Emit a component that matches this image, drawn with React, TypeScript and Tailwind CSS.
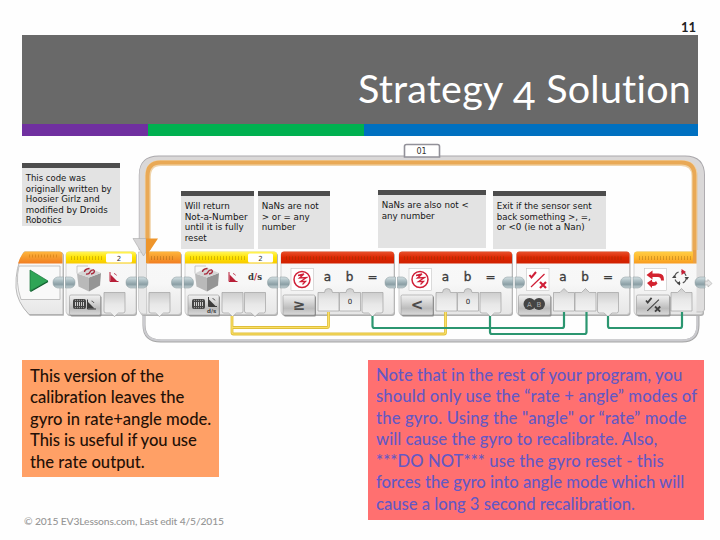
import type { ReactNode } from "react";

const UI = '"DejaVu Sans", sans-serif';

function Note({ lines, box, widths }: { lines: string[]; box: string; widths: number[] }) {
  return (
    <div className={`absolute border-t-[5px] border-[#4d4d4d] bg-[#e3e3e3] ${box}`}>
      <svg className="block overflow-visible" width="100%" height="100%">
        {lines.map((l, i) => (
          <text key={l} x="3.7" y={13 + i * 10.5} fontSize="9.300" textLength={widths[i]} lengthAdjust="spacingAndGlyphs" fontFamily={UI} fill="#161616">
            {l}
          </text>
        ))}
      </svg>
    </div>
  );
}

function Block({ x, w, fill, tab = 0 }: { x: number; w: number; fill: string; tab?: number }) {
  return (
    <g>
      <rect x={x + 1} y={253} width={w} height={63} rx="3" fill="#b0b0b0" />
      <rect x={x} y={252} width={w} height={62.5} rx="3" fill="url(#body)" stroke="#c2c2c2" strokeWidth=".7" />
      <path d={`M${x} 263.500V254.500q0-3 3-3h${w - 6}q3 0 3 3V263.500z`} fill={fill} />
      <path d={`M${x + 5} 258H${x + w - 7 - tab}`} stroke="#5a3a00" strokeOpacity=".25" strokeWidth="4" strokeDasharray="1 2" />
      {tab > 0 && (
        <>
          <rect x={x + w - tab - 4} y="253.500" width={tab} height="9" rx="1.500" fill="#fff" />
          <text x={x + w - tab / 2 - 4} y="260.500" fontSize="7" textAnchor="middle" fontFamily={UI} fill="#333">2</text>
        </>
      )}
    </g>
  );
}

/* Connector joining two neighbouring blocks */
function Joint({ x }: { x: number }) {
  return (
    <g>
      <path d={`M${x - 1} 277h-6q-4.500 1-4.500 5.500t4.500 5.500h6z`} fill="url(#joint)" stroke="#84979b" strokeWidth=".5" />
      <path d={`M${x + 1} 277h5q4.500 1 4.500 5.500t-4.500 5.500h-5z`} fill="url(#joint)" stroke="#84979b" strokeWidth=".5" />
    </g>
  );
}

function Mode({ x, w, children }: { x: number; w: number; children: ReactNode }) {
  return (
    <g>
      <rect x={x + 1} y="296" width={w} height="20.500" rx="1.500" fill="#8c8c8c" />
      <rect x={x} y="295" width={w} height="20" rx="1.500" fill="url(#mode)" stroke="#999" strokeWidth=".6" />
      {children}
    </g>
  );
}

/* Socket with a bump on top (input) or a tip at the bottom (output) */
function Port({ x, out = false, round = false, w = 21 }: { x: number; out?: boolean; round?: boolean; w?: number }) {
  const m = x + w / 2;
  const d = out
    ? `M${x} 292.500H${x + w}V311q0 2-2 2H${m + 4}l-4 3.500l-4-3.500H${x + 2}q-2 0-2-2z`
    : round
      ? `M${x} 292.500H${m - 4}q0-4 4-4t4 4H${x + w}V311H${x}z`
      : `M${x} 292.500H${m - 4}l4-4l4 4H${x + w}V311H${x}z`;
  return <path d={d} fill="url(#port)" stroke="#a2a2a2" strokeWidth=".7" />;
}

function Gyro({ x }: { x: number }) {
  return (
    <g transform={`translate(${x} 266.500)`}>
      <path d="M0 7L12 11V25L1.500 20z" fill="#b9b9b9" />
      <path d="M12 11L24 6.500L23 19L12 25z" fill="#959595" />
      <path d="M0 7L11.500 1L24 6.500L12 11z" fill="#d6d6d6" />
      <path d="M0 7V-.500H11" stroke="#aaa" strokeWidth=".6" fill="none" />
      <path d="M7.500 5.500q0-3 5-3.500M17 3.500q1.500 3-3 4M9 7.500q3 .500 4-2t4-2" stroke="#a82a3c" strokeWidth="1.400" fill="none" />
    </g>
  );
}

function Angle({ x, y, color }: { x: number; y: number; color: string }) {
  return (
    <g transform={`translate(${x} ${y})`}>
      <path d="M.500 0V9.500H9" stroke={color} fill="none" />
      <path d="M1 2.500L7.500 9H1z" fill={color} />
      <path d="M4.500 1.500q1.500 0 2.500 2" stroke={color} fill="none" strokeWidth=".8" />
    </g>
  );
}

function Film({ x }: { x: number }) {
  return (
    <g transform={`translate(${x} 299)`}>
      <rect width="13" height="10" rx="2" fill="#444" />
      <path d="M2 1.300h9M2 8.700h9" stroke="#ccc" strokeWidth=".7" strokeDasharray="1 1" />
      <path d="M2.500 3v4M4.500 3v4M6.500 3v4M8.500 3v4M10.500 3v4" stroke="#ddd" strokeWidth=".9" />
    </g>
  );
}

function CheckX({ x, y, s, a, b }: { x: number; y: number; s: number; a: string; b: string }) {
  return (
    <g transform={`translate(${x} ${y}) scale(${s})`} fill="none">
      <path d="M0 4l2 2.500L6.500 1" stroke={a} strokeWidth="2" />
      <path d="M1.500 16L15 3" stroke={a} strokeWidth="1.200" />
      <path d="M10.500 11l6 6M16.500 11l-6 6" stroke={b} strokeWidth="2.200" />
    </g>
  );
}

function Compare({ x, op, num = true }: { x: number; op?: string; num?: boolean }) {
  return (
    <g>
      <Block x={x} w={113} fill="url(#red)" />
      <rect x={x + 10} y="268.500" width="22.500" height="22" fill="#fff" stroke="#c5c5c5" strokeWidth=".6" />
      {op ? (
        <g stroke="#d01f37" fill="none" strokeWidth="1.500">
          <circle cx={x + 21} cy="279.500" r="8" />
          <path d={`M${x + 17} 275.500l6-1.500l-4.500 4l7-.500l-6 4l5 0l-3 3`} strokeWidth="1.300" />
        </g>
      ) : (
        <CheckX x={x + 13} y={271} s={1} a="#d01f37" b="#d01f37" />
      )}
      <g fontFamily={UI} fontSize="12" fill="#3c3c3c" stroke="#3c3c3c" strokeWidth=".35" textAnchor="middle">
        <text x={x + 46.500} y="281">a</text>
        <text x={x + 68.500} y="281">b</text>
        <text x={x + 91.500} y="281">=</text>
      </g>
      <Port x={x + 37} round={num} />
      <Port x={x + 58.500} round={num} />
      <Port x={x + 81} out />
      {num && <text x={x + 69} y="303.500" fontSize="7" textAnchor="middle" fontFamily={UI} fill="#222">0</text>}
      <Mode x={x + 2} w={32}>
        {op ? (
          <text x={x + 18} y="309.500" fontSize="15" textAnchor="middle" fontFamily={UI} fontWeight="bold" fill="#4b4b4b">{op}</text>
        ) : (
          <g>
            <circle cx={x + 13} cy="304" r="6" fill="#444" />
            <circle cx={x + 22.500} cy="304" r="6" fill="#444" />
            <text x={x + 13} y="306.700" fontSize="7" textAnchor="middle" fontFamily={UI} fill="#aaa">A</text>
            <text x={x + 22.500} y="306.700" fontSize="7" textAnchor="middle" fontFamily={UI} fill="#aaa">B</text>
          </g>
        )}
      </Mode>
    </g>
  );
}

function Gradient({ id, stops }: { id: string; stops: string[] }) {
  return (
    <linearGradient id={id} x1="0" y1="0" x2="0" y2="1">
      {stops.map((c, i) => (
        <stop key={i} offset={i / (stops.length - 1)} stopColor={c} />
      ))}
    </linearGradient>
  );
}

function Program() {
  return (
    <svg className="block" width="720" height="214" viewBox="0 136 720 214">
      <defs>
        <Gradient id="body" stops={["#f8f8f8", "#f7f7f7", "#e6e6e6"]} />
        <Gradient id="mode" stops={["#f2f2f2", "#d8d8d8", "#bcbcbc", "#dadada"]} />
        <Gradient id="port" stops={["#cdcdcd", "#e8e8e8", "#f2f2f2"]} />
        <Gradient id="joint" stops={["#d5e1e4", "#aebfc4", "#8b9fa5", "#c6d3d6"]} />
        <Gradient id="orange" stops={["#ffb63e", "#f69a2c", "#f27d22"]} />
        <Gradient id="amber" stops={["#ffce45", "#ffb92e", "#f79b20"]} />
        <Gradient id="yellow" stops={["#fff45e", "#ffe400", "#f8c900"]} />
        <Gradient id="red" stops={["#e8522d", "#dd2600", "#cf2000"]} />
      </defs>

      {/* loop frame */}
      <path d="M144 310V325q0 16 17 16H682q16 0 16-16V310" fill="none" stroke="#a5a5a5" strokeWidth="3" />
      <path d="M144 310V325q0 15.500 17 15.500H682q15.500 0 15.500-15.500V310" fill="none" stroke="#cbcbcf" strokeWidth="2" />
      <path d="M142.800 250V175q0-15.500 16-15.500H685q16 0 16 16V310" fill="none" stroke="#aaa8ac" strokeWidth="8" />
      <path d="M142.800 250V175q0-15.200 16-15.200H685q15.700 0 15.700 15.700V310" fill="none" stroke="#dad8d8" strokeWidth="6.800" />
      <path d="M147.800 250V177q0-14 13-14H681q13.500 0 13.500 13V256" fill="none" stroke="#f0d4aa" strokeWidth="6" />
      <path d="M147.500 250V176q0-13.500 13-13.500H681q13.500 0 13.500 13V256" fill="none" stroke="#e9a956" strokeWidth="4" />
      <path d="M404.500 157V146.500q0-2 2-2h31q2 0 2 2V157z" fill="#fff" stroke="#929199" strokeWidth="1.600" />
      <text x="421.500" y="154" fontSize="8" textAnchor="middle" fontFamily={UI} fill="#333">01</text>

      {/* start block */}
      <path d="M24 252H60q3 0 3 3V315H29Q17 302 16 288Q15 267 24 252z" fill="#b0b0b0" transform="translate(.8 .8)" />
      <path d="M24 252H60q3 0 3 3V314.500H29Q17 302 16 288Q15 267 24 252z" fill="url(#body)" stroke="#aaa" strokeWidth=".8" />
      <path d="M18 263.500Q21 254 25 251.500H59q3.500 0 3.500 3V263.500z" fill="url(#orange)" />
      <path d="M29 256H57" stroke="#b96a00" strokeOpacity=".4" strokeWidth="3" strokeDasharray="1 2" />
      <path d="M19 266H60V299.500H21Q15 282 19 266z" fill="#f9f9f9" stroke="#b4b4b4" strokeWidth=".8" />
      <path d="M30 270L48 281L30 291z" fill="#2fa556" stroke="#147438" strokeWidth=".7" />
      <path d="M30.500 291.500L48 281.500" stroke="#0b5f2a" strokeWidth="1.200" />

      <Block x={66} w={70} fill="url(#yellow)" tab={26} />
      <Gyro x={77} />
      <Angle x={109.500} y={272} color="#b81f38" />
      <Port x={104} out />
      <Mode x={69.500} w={31}>
        <Film x={73} />
        <Angle x={87} y={299.500} color="#3d3d3d" />
      </Mode>

      <Block x={140} w={41} fill="url(#orange)" />
      <path d="M138.500 252V308q0 5 5 6h3V252z" fill="#e8e8e8" stroke="#bdbdbd" strokeWidth=".6" />
      <path d="M133 238.500H146V252L143.500 256z" fill="#d6d5d6" stroke="#aaa" strokeWidth=".6" />
      <path d="M146 238.500H158L149 252V263H146z" fill="#ee952b" />
      <Port x={149} out />

      <Block x={185} w={92} fill="url(#yellow)" tab={25} />
      <Gyro x={195} />
      <Angle x={228.500} y={272} color="#b81f38" />
      <text x="248" y="280" fontFamily={'"DejaVu Serif", serif'} fontWeight="bold" fontSize="8.500" textLength="14" lengthAdjust="spacingAndGlyphs" fill="#3b3b3b">
        d<tspan fill="#c61d34">/</tspan>s
      </text>
      <Port x={222} out />
      <Port x={244.500} out />
      <Mode x={188} w={31}>
        <Film x={192} />
        <Angle x={208} y={297} color="#3d3d3d" />
        <text x="207" y="312.500" fontSize="5.500" fontFamily={UI} fontWeight="bold" fill="#444">d/s</text>
      </Mode>

      <Compare x={281} op="≥" />
      <Compare x={399} op="<" />
      <Compare x={516.500} num={false} />

      {/* loop exit block */}
      <Block x={634} w={69} fill="url(#amber)" />
      <path d="M693 250V263H697V250z" fill="#eaa044" />
      <path d="M696.500 250H704.500V309q0 3-3 3h-5z" fill="#dfdede" />
      <path d="M704.500 250V309q0 3-3 3h-5" fill="none" stroke="#b2b2b2" strokeWidth=".7" />
      <rect x="644.500" y="268.500" width="22" height="22" fill="#fff" stroke="#c5c5c5" strokeWidth=".6" />
      <path d="M646.500 275l6-4.500v3h6q6 0 5.500 7h-3q0-3.500-3-3.500h-5.500v2.500zM647 283l5-3.500v2q3 1.500 4-.500l1.500 2.500q-2 3-5.500 2.500v2z" fill="#d3232f" />
      <circle cx="680.500" cy="277.500" r="5.800" fill="none" stroke="#555" strokeWidth="1.200" strokeDasharray="6.500 2.600" />
      <path d="M681.500 269l4.500 3l-4.500 3z" fill="#c71f36" />
      <path d="M684.500 277l2.500 3l2-3zM676.500 278l-2.200-3l-2.300 3zM680 281l-3 2.500l3 2z" fill="#444" />
      <Port x={671} />
      <Mode x={636.500} w={33}>
        <CheckX x={646} y={297} s={0.86} a="#404040" b="#404040" />
      </Mode>

      <Joint x={64.500} />
      <Joint x={137.500} />
      <Joint x={183} />
      <Joint x={279} />
      <Joint x={396.500} />
      <Joint x={514} />
      <Joint x={632} />
      <path d="M705 277h-5q-5 1-5 5.500t5 5.500h5z" fill="url(#joint)" stroke="#84979b" strokeWidth=".5" />
      <path d="M705 281h3v-1.500l4 4l-4 3.500v-2h-3z" fill="#e4e4e4" stroke="#aaa" strokeWidth=".6" />

      {/* data wires */}
      <g fill="none" strokeWidth="2.800" stroke="#dfbf3b">
        <path d="M232 316V332.500q0 1.500 1.500 1.500H444q1.500 0 1.500-1.500V312" />
        <path d="M232 327.500H327q1.500 0 1.500-1.500V312" />
      </g>
      <g fill="none" strokeWidth="1.200" stroke="#fbe066">
        <path d="M232 316V332.500q0 1.500 1.500 1.500H444q1.500 0 1.500-1.500V312" />
        <path d="M232 327.500H327q1.500 0 1.500-1.500V312" />
      </g>
      <g fill="none" strokeWidth="2.200" stroke="#2b9670">
        <path d="M372.500 316V326q0 2 2 2H562q2 0 2-2V312" />
        <path d="M490 316V332q0 2 2 2H584.500q2 0 2-2V312" />
        <path d="M608 316V326q0 2 2 2H680q2 0 2-2V312" />
      </g>
    </svg>
  );
}

function Lines({ rows }: { rows: [string, string][] }) {
  return (
    <>
      {rows.map(([text, tracking]) => (
        <div key={text} className={`whitespace-nowrap ${tracking}`}>{text}</div>
      ))}
    </>
  );
}

export default function App() {
  return (
    <main className="flex h-[540px] w-[720px] flex-col overflow-hidden bg-[#fefefe] font-[Lato,sans-serif]">
      <div className="flex h-[35px] items-end justify-end pr-6 pb-0 text-[13px] leading-4 font-bold text-[#222]">11</div>
      <header className="mx-[22px] flex h-[101px] flex-col">
        <h1 className="flex h-[89px] items-end justify-end bg-[#696969] pr-[7px] pb-[10px] text-[39.5px] leading-[52px] tracking-[0.2px] whitespace-pre text-white">
          <span>Strategy </span>
          <span className="relative top-[7px]">4</span>
          <span> Solution</span>
        </h1>
        <div className="flex h-3">
          <div className="w-[126px] bg-[#7030a0]" />
          <div className="w-[216px] bg-[#00b050]" />
          <div className="flex-1 bg-[#0070c0]" />
        </div>
      </header>

      <section className="relative h-[214px] shrink-0">
        <Program />
        <Note box="left-[22px] top-[27px] h-[63px] w-[98px]" lines={["This code was", "originally written by", "Hoosier Girlz and", "modified by Droids", "Robotics"]} widths={[60, 86, 74, 82, 36]} />
        <Note box="left-[181px] top-[55px] h-[58px] w-[73px]" lines={["Will return", "Not-a-Number", "until it is fully", "reset"]} widths={[45, 63, 59, 22]} />
        <Note box="left-[258px] top-[55px] h-[58px] w-[72px]" lines={["NaNs are not", "> or = any", "number"]} widths={[57, 48, 34]} />
        <Note box="left-[378px] top-[54px] h-[58px] w-[108px]" lines={["NaNs are also not <", "any number"]} widths={[87, 53]} />
        <Note box="left-[493px] top-[55px] h-[58px] w-[113px]" lines={["Exit if the sensor sent", "back something >, =,", "or <0 (ie not a Nan)"]} widths={[95, 94, 88]} />
      </section>

      <div className="flex h-[190px] pt-[10px] pr-4 pl-[22px] text-[16.6px] leading-[21.6px]">
        <div className="flex w-[346px] flex-col">
          <div className="h-[117px] w-[197px] bg-[#ffa066] pt-[5.5px] pl-2 font-medium text-[#241007]">
            <Lines
              rows={[
                ["This version of the", "tracking-[-0.04px]"],
                ["calibration leaves the", "tracking-[0.01px]"],
                ["gyro in rate+angle mode.", "tracking-[0.01px]"],
                ["This is useful if you use", "tracking-[-0.06px]"],
                ["the rate output.", "tracking-[0.01px]"],
              ]}
            />
          </div>
          <footer className="mt-[36px] pl-[2px] text-[10.3px] leading-4 font-medium tracking-[-0.13px] text-[#969696]">© 2015 EV3Lessons.com, Last edit 4/5/2015</footer>
        </div>
        <div className="h-[160px] w-[336px] bg-[#ff7070] pt-[4.5px] pl-2 font-medium text-[#6458c4]">
          <Lines
            rows={[
              ["Note that in the rest of your program, you", "tracking-[0.07px]"],
              ["should only use the “rate + angle” modes of", "tracking-[0.14px]"],
              ["the gyro. Using the \"angle\" or “rate” mode", "tracking-[0.18px]"],
              ["will cause the gyro to recalibrate. Also,", "tracking-[0.04px]"],
              ["***DO NOT*** use the gyro reset - this", "tracking-[0.1px]"],
              ["forces the gyro into angle mode which will", "tracking-[0.02px]"],
              ["cause a long 3 second recalibration.", "tracking-[0.01px]"],
            ]}
          />
        </div>
      </div>
    </main>
  );
}
